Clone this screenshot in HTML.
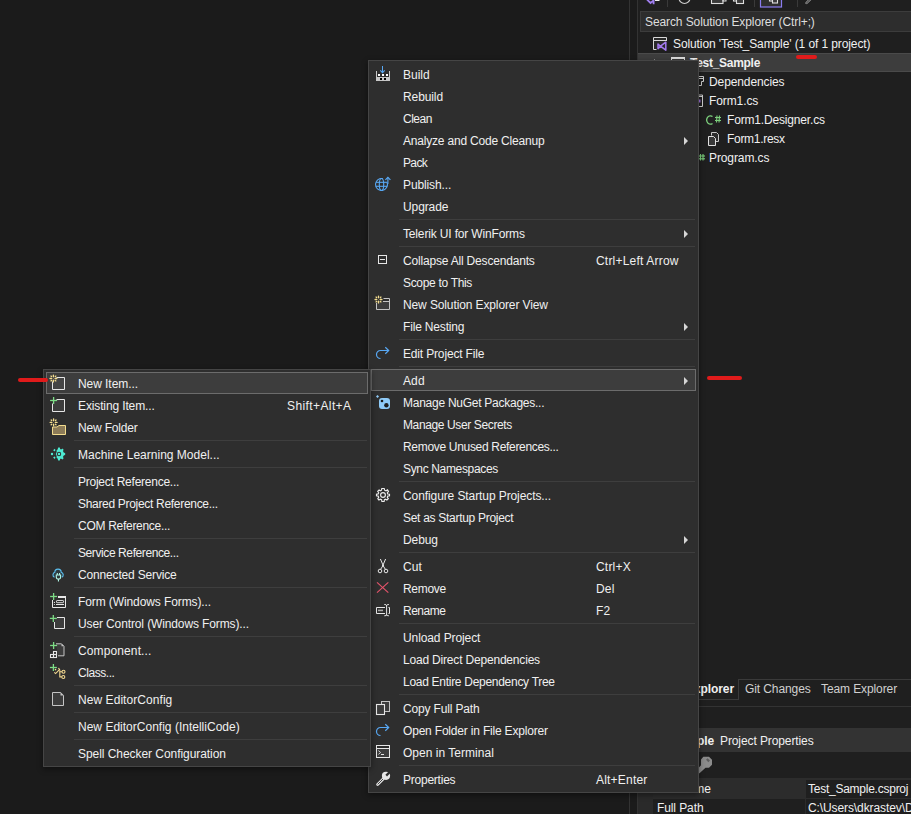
<!DOCTYPE html>
<html><head><meta charset="utf-8">
<style>
*{margin:0;padding:0;box-sizing:border-box}
html,body{width:911px;height:814px;overflow:hidden;background:#1b1b1b;font-family:"Liberation Sans",sans-serif;font-size:12px;color:#f0f0f0;letter-spacing:-0.1px}
.abs{position:absolute}
.menu{position:absolute;background:#2e2e2e;border:1px solid #454545;box-shadow:0 2px 6px rgba(0,0,0,.45)}
.it{position:absolute;left:2px;right:2px;height:22px;line-height:22px;white-space:nowrap}
.it .t{position:absolute;left:32px;top:1px}
.it .k{position:absolute;top:1px;letter-spacing:0.2px}
.it .ar{position:absolute;left:313px;top:8px;width:0;height:0;border-left:4.5px solid #d6d6d6;border-top:4px solid transparent;border-bottom:4px solid transparent}
.it .ic{position:absolute;left:4px;top:3px;width:16px;height:16px;overflow:visible}
.sel{background:#3d3d3d;outline:1px solid #6c6c6c;outline-offset:-1px}
.sep{position:absolute;left:30px;right:3px;height:1px;background:#3e3e3e}
.txt{white-space:nowrap;line-height:15px;padding-top:1px}

</style></head><body>
<!-- splitter lines -->
<div class="abs" style="left:629px;top:0;width:1px;height:814px;background:#333333"></div>
<div class="abs" style="left:637px;top:0;width:1px;height:814px;background:#333333"></div>
<!-- solution explorer panel -->
<div class="abs" style="left:638px;top:0;width:273px;height:814px;background:#1f1f1f"></div>
<!-- toolbar icons (cut off at top) -->
<svg class="abs" style="left:638px;top:0" width="273" height="11" viewBox="0 0 273 11">
  <path d="M8 -1.5 L12.5 3 L15.5 0.5 M15.6 -4 V4.2" fill="none" stroke="#a07ef0" stroke-width="1.8"/>
  <rect x="17" y="-2" width="4.5" height="3" fill="#f0f0f0"/>
  <rect x="29" y="0" width="1" height="7" fill="#3a3a3a"/>
  <circle cx="46.5" cy="-2" r="5.5" fill="none" stroke="#cfcfcf" stroke-width="1.2"/>
  <rect x="73.5" y="-4" width="11.5" height="7.5" fill="#3a3a3a" stroke="#dedede" stroke-width="1.1"/>
  <rect x="85" y="-2" width="3" height="3" fill="none" stroke="#dedede"/>
  <rect x="95.5" y="-4" width="5" height="5" fill="none" stroke="#dedede" stroke-width="1.1"/>
  <rect x="98.5" y="-2" width="7" height="5.5" fill="#3a3a3a" stroke="#dedede" stroke-width="1.1"/>
  <rect x="116" y="0" width="1" height="7" fill="#3a3a3a"/>
  <rect x="122.5" y="-1" width="21" height="8" fill="#2e2e2e" stroke="#8a7cf0" stroke-width="1.2"/>
  <rect x="131.5" y="-4" width="5" height="5" fill="none" stroke="#dedede" stroke-width="1.1"/>
  <rect x="134.5" y="-2" width="5" height="5" fill="#3a3a3a" stroke="#dedede" stroke-width="1.1"/>
  <rect x="159" y="0" width="1" height="7" fill="#3a3a3a"/>
  <path d="M168.5 3 L174 -2.5" stroke="#9a9a9a" stroke-width="2.4" stroke-linecap="round"/>
  <path d="M168.5 3 L174 -2.5" stroke="#1f1f1f" stroke-width="0.9" stroke-linecap="round"/>
</svg>
<!-- search box -->
<div class="abs" style="left:640px;top:11px;width:271px;height:21px;background:#2d2d2d;border:1px solid #3c3c3c;border-right:none"></div>
<div class="abs txt" style="left:645px;top:14px;color:#dedede">Search Solution Explorer (Ctrl+;)</div>
<!-- tree -->
<svg class="abs" style="left:652px;top:36px" width="16" height="16" viewBox="0 0 16 16">
  <rect x="1.5" y="1.5" width="13" height="12" fill="#2a2a2a"/>
  <path d="M4.5 13.5 H1.5 V1.5 H14.5 V5" fill="none" stroke="#d8d8d8" stroke-width="1"/><line x1="1.5" y1="4.5" x2="14.5" y2="4.5" stroke="#d8d8d8"/>
  <path d="M6 8 L8.5 10.2 L6 12.6Z M8.5 10.2 L13.8 6.2 V14.2Z" fill="none" stroke="#a47af0" stroke-width="1.5" stroke-linejoin="round"/>
</svg>
<div class="abs txt" style="left:673px;top:36px">Solution 'Test_Sample' (1 of 1 project)</div>
<div class="abs" style="left:638px;top:53px;width:273px;height:19px;background:#3d3d3d;border-top:1px solid #4a4a4a;border-bottom:1px solid #4a4a4a"></div>
<div class="abs" style="left:671px;top:57px;width:14px;height:10px;border:1px solid #dcdcdc;border-top-width:2px;background:#3a3a3a"></div>
<div class="abs" style="left:654px;top:59px;width:1px;height:1px;background:#888"></div>
<div class="abs txt" style="left:690px;top:55px;font-weight:bold;letter-spacing:-0.28px">Test_Sample</div>
<div class="abs txt" style="left:709px;top:74px">Dependencies</div>
<div class="abs txt" style="left:709px;top:93px">Form1.cs</div>
<svg class="abs" style="left:706px;top:114px" width="18" height="12" viewBox="0 0 18 12">
  <path d="M6.5 2.6 A3.6 4.2 0 1 0 6.5 9.4" fill="none" stroke="#7cd07c" stroke-width="1.3"/>
  <g stroke="#7cd07c" stroke-width="1.1"><line x1="11" y1="1.5" x2="10.5" y2="8.5"/><line x1="13.5" y1="1.5" x2="13" y2="8.5"/><line x1="9" y1="3.5" x2="15" y2="3.5"/><line x1="9" y1="6.5" x2="15" y2="6.5"/></g>
</svg>
<div class="abs txt" style="left:727px;top:112px;letter-spacing:-0.17px">Form1.Designer.cs</div>
<svg class="abs" style="left:707px;top:131px" width="14" height="16" viewBox="0 0 14 16">
  <path d="M4.5 4.5 V1.5 H9.5 L11.5 3.5 V10.5 H9" fill="#2c2c2c" stroke="#c8c8c8"/><path d="M1.5 5.5 H6.5 L8.5 7.5 V14.5 H1.5Z" fill="#383838" stroke="#e0e0e0"/>
</svg>
<div class="abs txt" style="left:727px;top:131px;letter-spacing:-0.3px">Form1.resx</div>
<svg class="abs" style="left:698px;top:153px" width="8" height="9" viewBox="0 0 8 9">
  <g stroke="#7cd07c" stroke-width="1.1"><line x1="2.5" y1="1" x2="2.5" y2="7.5"/><line x1="5" y1="1" x2="5" y2="7.5"/><line x1="0" y1="3" x2="7" y2="3"/><line x1="0" y1="5.8" x2="7" y2="5.8"/></g>
</svg>
<div class="abs txt" style="left:709px;top:150px">Program.cs</div>
<svg class="abs" style="left:690px;top:74px" width="16" height="36" viewBox="0 0 16 36">
  <path d="M6 2.5 H13.5 V7.5 H11.5 V11.5 H6" fill="none" stroke="#d0d0d0" stroke-width="1"/><line x1="6" y1="4.5" x2="13.5" y2="4.5" stroke="#d0d0d0"/>
  <path d="M6 21 H12.5 V32.5 H6" fill="none" stroke="#d0d0d0" stroke-width="1"/><line x1="6" y1="22.5" x2="12.5" y2="22.5" stroke="#d0d0d0"/>
  <rect x="8.5" y="25.5" width="2" height="3" fill="#a070e0"/>
</svg>
<!-- red marker under "1 of 1" -->
<div class="abs" style="left:796px;top:55px;width:21px;height:4px;border-radius:2px;background:#e01b1b"></div>

<!-- bottom tabs -->
<div class="abs" style="left:738px;top:679px;width:173px;height:1px;background:#3a3a3a"></div>
<div class="abs" style="left:738px;top:679px;width:1px;height:21px;background:#3a3a3a"></div>
<div class="abs" style="left:638px;top:699px;width:100px;height:1px;background:#3a3a3a"></div>
<div class="abs txt" style="left:600px;width:134px;text-align:right;top:681px;font-weight:bold;color:#f0f0f0">Solution Explorer</div>
<div class="abs txt" style="left:745px;top:681px;color:#d0d0d0">Git Changes</div>
<div class="abs txt" style="left:821px;top:681px;color:#d0d0d0">Team Explorer</div>
<div class="abs" style="left:638px;top:706px;width:273px;height:1px;background:#333333"></div>
<!-- properties -->
<div class="abs" style="left:638px;top:728px;width:273px;height:24px;background:#333333"></div>
<div class="abs txt" style="left:600px;width:114px;text-align:right;top:733px;font-weight:bold">Test_Sample</div>
<div class="abs txt" style="left:720px;top:733px">Project Properties</div>
<svg class="abs" style="left:696px;top:752px" width="22" height="24" viewBox="0 0 22 24">
  <path d="M7.3 4.8 H13 L16 7.8 V12.8 L13 15.7 H9.5 L3.5 21.3 H1 V17.5 L5 13.2 V7.5Z" fill="#8c8c8c"/>
  <path d="M10.8 7 L13.2 9.4" stroke="#5e5e5e" stroke-width="2.2"/>
</svg>
<div class="abs" style="left:638px;top:778px;width:15px;height:36px;background:#2a2a2a"></div>
<div class="abs" style="left:653px;top:778px;width:258px;height:21px;background:#2c2c2c"></div>
<div class="abs" style="left:806px;top:780px;width:105px;height:18px;background:#1f1f1f"></div>
<div class="abs" style="left:653px;top:799px;width:258px;height:15px;background:#1f1f1f"></div>
<div class="abs" style="left:805px;top:799px;width:1px;height:15px;background:#2c2c2c"></div>
<div class="abs txt" style="left:657px;top:781px">File Name</div>
<div class="abs txt" style="left:808px;top:781px;letter-spacing:-0.25px">Test_Sample.csproj</div>
<div class="abs txt" style="left:657px;top:800px">Full Path</div>
<div class="abs txt" style="left:808px;top:800px">C:\Users\dkrastev\Desktop</div>

<!-- main menu -->
<div class="menu" style="left:368px;top:60px;width:331px;height:733px">
<div class="it" style="top:2px"><svg class="ic" viewBox="0 0 16 16"><rect x="1" y="5" width="1" height="10" fill="#c8c8c8"/><rect x="14" y="5" width="1" height="10" fill="#c8c8c8"/><rect x="1" y="11" width="14" height="4" fill="#c8c8c8"/><rect x="3" y="8" width="2" height="2" fill="#fff"/><rect x="7" y="8" width="2" height="2" fill="#fff"/><rect x="11" y="8" width="2" height="2" fill="#fff"/><rect x="5" y="12" width="2" height="2" fill="#000"/><rect x="9" y="12" width="2" height="2" fill="#000"/><rect x="7" y="0" width="1" height="6" fill="#58a8f4"/><path d="M5.3 4.3 L7.5 6.6 L9.7 4.3" fill="none" stroke="#58a8f4" stroke-width="1.1"/></svg><span class="t" style="letter-spacing:-0.000px">Build</span></div>
<div class="it" style="top:24px"><span class="t" style="letter-spacing:-0.100px">Rebuild</span></div>
<div class="it" style="top:46px"><span class="t" style="letter-spacing:-0.500px">Clean</span></div>
<div class="it" style="top:68px"><span class="t" style="letter-spacing:-0.196px">Analyze and Code Cleanup</span><span class="ar"></span></div>
<div class="it" style="top:90px"><span class="t" style="letter-spacing:-0.633px">Pack</span></div>
<div class="it" style="top:112px"><svg class="ic" viewBox="0 0 16 16"><g fill="none" stroke="#58a8f4" stroke-width="1.1"><path d="M12.14 6.45 A6 6 0 1 1 8.05 2.7"/><ellipse cx="6.5" cy="8.5" rx="2.2" ry="6"/><line x1="0.8" y1="6.3" x2="12.3" y2="6.3"/><line x1="0.8" y1="10.3" x2="12.3" y2="10.3"/><line x1="12.9" y1="1.5" x2="12.9" y2="8"/><path d="M10.4 3.9 L12.9 1.3 L15.4 3.9"/></g></svg><span class="t" style="letter-spacing:-0.122px">Publish...</span></div>
<div class="it" style="top:134px"><span class="t" style="letter-spacing:-0.100px">Upgrade</span></div>
<div class="sep" style="top:158px"></div>
<div class="it" style="top:161px"><span class="t" style="letter-spacing:-0.155px">Telerik UI for WinForms</span><span class="ar"></span></div>
<div class="sep" style="top:185px"></div>
<div class="it" style="top:188px"><svg class="ic" viewBox="0 0 16 16"><rect x="3.5" y="3.5" width="8" height="8" fill="none" stroke="#e6e6e6" stroke-width="1"/><rect x="5" y="7" width="5" height="1" fill="#e6e6e6"/></svg><span class="t" style="letter-spacing:-0.187px">Collapse All Descendants</span><span class="k" style="left:225px">Ctrl+Left Arrow</span></div>
<div class="it" style="top:210px"><span class="t" style="letter-spacing:-0.317px">Scope to This</span></div>
<div class="it" style="top:232px"><svg class="ic" viewBox="0 0 16 16"><rect x="1.5" y="5" width="13" height="8.5" fill="#3c3c3c"/><path d="M1.5 7 V13.5 H14.5 V2.5 H8.5 M8 5.5 H14.5" fill="none" stroke="#c4c4c4" stroke-width="1"/><g stroke="#f3dc8e" stroke-width="1.35" stroke-linecap="round"><line x1="3.5" y1="0.10000000000000009" x2="3.5" y2="1.8"/><line x1="3.5" y1="5.2" x2="3.5" y2="6.9"/><line x1="0.10000000000000009" y1="3.5" x2="1.8" y2="3.5"/><line x1="5.2" y1="3.5" x2="6.9" y2="3.5"/><line x1="1.1" y1="1.1" x2="1.6" y2="1.6"/><line x1="5.4" y1="5.4" x2="5.9" y2="5.9"/><line x1="5.9" y1="1.1" x2="5.4" y2="1.6"/><line x1="1.6" y1="5.4" x2="1.1" y2="5.9"/></g></svg><span class="t" style="letter-spacing:-0.116px">New Solution Explorer View</span></div>
<div class="it" style="top:254px"><span class="t" style="letter-spacing:-0.173px">File Nesting</span><span class="ar"></span></div>
<div class="sep" style="top:278px"></div>
<div class="it" style="top:281px"><svg class="ic" viewBox="0 0 16 16"><g fill="none" stroke="#58a8f4" stroke-width="1.2"><path d="M13.6 5.5 H5.5 A4 4 0 0 0 5.5 13.5"/><path d="M10.3 2.2 L13.7 5.5 L10.3 8.8"/></g></svg><span class="t" style="letter-spacing:-0.163px">Edit Project File</span></div>
<div class="sep" style="top:305px"></div>
<div class="it sel" style="top:308px"><span class="t" style="letter-spacing:0.100px">Add</span><span class="ar"></span></div>
<div class="it" style="top:330px"><svg class="ic" viewBox="0 0 16 16"><rect x="4" y="4" width="11" height="11" rx="3" fill="#8fcbf8"/><circle cx="7" cy="7" r="1.3" fill="#1a1a1a"/><circle cx="11.4" cy="11.3" r="2.2" fill="#1e1e1e"/><path d="M2.5 0.9 L4 2.4 L2.5 3.9 L1 2.4Z" fill="#8fcbf8"/></svg><span class="t" style="letter-spacing:-0.257px">Manage NuGet Packages...</span></div>
<div class="it" style="top:352px"><span class="t" style="letter-spacing:-0.378px">Manage User Secrets</span></div>
<div class="it" style="top:374px"><span class="t" style="letter-spacing:-0.315px">Remove Unused References...</span></div>
<div class="it" style="top:396px"><span class="t" style="letter-spacing:-0.343px">Sync Namespaces</span></div>
<div class="sep" style="top:420px"></div>
<div class="it" style="top:423px"><svg class="ic" viewBox="0 0 16 16"><g fill="none" stroke="#ececec" stroke-width="1.15"><circle cx="8" cy="8" r="2.4"/><path d="M6.8 1.5 H9.2 L9.6 3.2 L11 3.8 L12.5 2.9 L13.5 4.5 L12.3 5.8 L12.7 7 L14.5 7.2 V8.8 L12.7 9.1 L12.3 10.3 L13.3 11.7 L11.9 13 L10.5 12.2 L9.4 12.7 L9.1 14.5 H6.9 L6.6 12.7 L5.3 12.2 L3.9 13.1 L2.8 11.8 L3.7 10.4 L3.2 9.1 L1.5 8.8 V7.2 L3.2 6.9 L3.7 5.7 L2.7 4.3 L4.1 3 L5.4 3.8 L6.5 3.2Z"/></g></svg><span class="t" style="letter-spacing:-0.093px">Configure Startup Projects...</span></div>
<div class="it" style="top:445px"><span class="t" style="letter-spacing:-0.290px">Set as Startup Project</span></div>
<div class="it" style="top:467px"><span class="t" style="letter-spacing:-0.100px">Debug</span><span class="ar"></span></div>
<div class="sep" style="top:491px"></div>
<div class="it" style="top:494px"><svg class="ic" viewBox="0 0 16 16"><g fill="none" stroke="#e6e6e6" stroke-width="1"><path d="M5.4 1 L8.4 8 M10.6 1 L7.6 8"/><path d="M8 7.5 L5.6 11.4 M8 7.5 L10.4 11.4"/><circle cx="5" cy="13" r="1.8"/><circle cx="11" cy="13" r="1.8"/></g><circle cx="8" cy="7.5" r="0.9" fill="#e6e6e6"/></svg><span class="t" style="letter-spacing:0.100px">Cut</span><span class="k" style="left:225px">Ctrl+X</span></div>
<div class="it" style="top:516px"><svg class="ic" viewBox="0 0 16 16"><g stroke="#e8546c" stroke-width="1.1"><line x1="2" y1="2.3" x2="13.3" y2="12.7"/><line x1="13.3" y1="2.3" x2="2" y2="12.7"/></g></svg><span class="t" style="letter-spacing:-0.300px">Remove</span><span class="k" style="left:225px">Del</span></div>
<div class="it" style="top:538px"><svg class="ic" viewBox="0 0 16 16"><g fill="none" stroke="#e6e6e6" stroke-width="1"><path d="M10 5.5 H1.5 V11.5 H10"/><path d="M11.6 3 V13.5 M9.3 2.5 Q11.6 2.5 11.6 3.5 Q11.6 2.5 13.9 2.5 M9.3 13.8 Q11.6 13.8 11.6 12.8 Q11.6 13.8 13.9 13.8 M13.5 5.5 H14.5 V11.5 H13.5"/></g><rect x="3" y="7.6" width="5" height="1.6" fill="#a8a8a8"/></svg><span class="t" style="letter-spacing:-0.500px">Rename</span><span class="k" style="left:225px">F2</span></div>
<div class="sep" style="top:562px"></div>
<div class="it" style="top:565px"><span class="t" style="letter-spacing:-0.100px">Unload Project</span></div>
<div class="it" style="top:587px"><span class="t" style="letter-spacing:-0.187px">Load Direct Dependencies</span></div>
<div class="it" style="top:609px"><span class="t" style="letter-spacing:-0.285px">Load Entire Dependency Tree</span></div>
<div class="sep" style="top:633px"></div>
<div class="it" style="top:636px"><svg class="ic" viewBox="0 0 16 16"><rect x="6.5" y="1.5" width="8" height="10" fill="#3c3c3c" stroke="#c4c4c4" stroke-width="1"/><rect x="1.5" y="4.5" width="8" height="10" fill="#3c3c3c" stroke="#e6e6e6" stroke-width="1.1"/></svg><span class="t" style="letter-spacing:-0.162px">Copy Full Path</span></div>
<div class="it" style="top:658px"><svg class="ic" viewBox="0 0 16 16"><g fill="none" stroke="#58a8f4" stroke-width="1.2"><path d="M13.6 5.5 H5.5 A4 4 0 0 0 5.5 13.5"/><path d="M10.3 2.2 L13.7 5.5 L10.3 8.8"/></g></svg><span class="t" style="letter-spacing:-0.189px">Open Folder in File Explorer</span></div>
<div class="it" style="top:680px"><svg class="ic" viewBox="0 0 16 16"><rect x="1.5" y="1.5" width="13" height="12" fill="#3c3c3c" stroke="#e6e6e6" stroke-width="1"/><rect x="2" y="2" width="12" height="2.5" fill="#2a2a2a"/><line x1="1.5" y1="4.5" x2="14.5" y2="4.5" stroke="#e6e6e6"/><path d="M3.4 6.6 L5.6 8.5 L3.4 10.4" fill="none" stroke="#cfcfcf" stroke-width="1"/><rect x="6" y="10" width="3" height="1" fill="#e6e6e6"/></svg><span class="t" style="letter-spacing:0.020px">Open in Terminal</span></div>
<div class="sep" style="top:704px"></div>
<div class="it" style="top:707px"><svg class="ic" viewBox="0 0 16 16"><line x1="2.6" y1="13.4" x2="8.6" y2="7.4" stroke="#e2e2e2" stroke-width="2.8" stroke-linecap="round"/><line x1="2.9" y1="13.1" x2="8" y2="8" stroke="#2e2e2e" stroke-width="0.9" stroke-linecap="round"/><circle cx="11" cy="4.8" r="4.1" fill="#e6e6e6"/><line x1="11.2" y1="4.6" x2="16" y2="-0.2" stroke="#2e2e2e" stroke-width="2.3"/></svg><span class="t" style="letter-spacing:-0.233px">Properties</span><span class="k" style="left:225px">Alt+Enter</span></div>
</div>
<!-- submenu -->
<div class="menu" style="left:43px;top:369px;width:328px;height:398px">
<div class="it sel" style="top:2px"><svg class="ic" viewBox="0 0 16 16"><rect x="2.5" y="2.5" width="12" height="12" fill="#454545"/><path d="M2.5 6.5 V14.5 H14.5 V2.5 H6.5" fill="none" stroke="#e6e6e6" stroke-width="1"/><g stroke="#f3dc8e" stroke-width="1.35" stroke-linecap="round"><line x1="3.4" y1="0.10000000000000009" x2="3.4" y2="1.8"/><line x1="3.4" y1="5.2" x2="3.4" y2="6.9"/><line x1="0.0" y1="3.5" x2="1.7" y2="3.5"/><line x1="5.1" y1="3.5" x2="6.8" y2="3.5"/><line x1="1.0" y1="1.1" x2="1.5" y2="1.6"/><line x1="5.3" y1="5.4" x2="5.8" y2="5.9"/><line x1="5.8" y1="1.1" x2="5.3" y2="1.6"/><line x1="1.5" y1="5.4" x2="1.0" y2="5.9"/></g></svg><span class="t" style="letter-spacing:-0.060px">New Item...</span></div>
<div class="it" style="top:24px"><svg class="ic" viewBox="0 0 16 16"><rect x="2.5" y="2.5" width="12" height="12" fill="#3c3c3c"/><path d="M2.5 6.5 V14.5 H14.5 V2.5 H6.5" fill="none" stroke="#e6e6e6" stroke-width="1"/><g stroke="#7ddc86" stroke-width="1.3"><line x1="0.10000000000000009" y1="3.5" x2="7.1" y2="3.5"/><line x1="3.6" y1="0.0" x2="3.6" y2="7.0"/></g></svg><span class="t" style="letter-spacing:-0.127px">Existing Item...</span><span class="k" style="left:241px;letter-spacing:0.4px">Shift+Alt+A</span></div>
<div class="it" style="top:46px"><svg class="ic" viewBox="0 0 16 16"><path d="M2.5 8 H7 L9 6.5 H15.5 V15.5 H2.5Z" fill="#8c7b58" stroke="#f3dc8e" stroke-width="1"/><g stroke="#f3dc8e" stroke-width="1.35" stroke-linecap="round"><line x1="3.6" y1="0.0" x2="3.6" y2="1.7"/><line x1="3.6" y1="5.1" x2="3.6" y2="6.8"/><line x1="0.20000000000000018" y1="3.4" x2="1.9000000000000001" y2="3.4"/><line x1="5.3" y1="3.4" x2="7.0" y2="3.4"/><line x1="1.2000000000000002" y1="1.0" x2="1.7000000000000002" y2="1.5"/><line x1="5.5" y1="5.3" x2="6.0" y2="5.8"/><line x1="6.0" y1="1.0" x2="5.5" y2="1.5"/><line x1="1.7000000000000002" y1="5.3" x2="1.2000000000000002" y2="5.8"/></g></svg><span class="t" style="letter-spacing:-0.167px">New Folder</span></div>
<div class="sep" style="top:70px"></div>
<div class="it" style="top:73px"><svg class="ic" viewBox="0 0 16 16"><g fill="#4eead2"><circle cx="2" cy="8" r="1.2"/><path d="M4.5 2.8 L5.8 4.2 L4.5 5.6 L3.2 4.2Z"/><path d="M4.5 10.2 L5.8 11.6 L4.5 13 L3.2 11.6Z"/><circle cx="4.6" cy="8" r="0.6"/></g><path fill="#4eead2" fill-rule="evenodd" d="M8.2 1.6 H9.8 L10.2 3.2 L11.8 3.2 L12.6 2.6 L13.6 3.7 L13 5 L13.5 6.2 L15.2 7.2 V8.8 L13.5 9.8 L13 11 L13.6 12.3 L12.6 13.4 L11.3 12.8 L10.2 12.8 L9.8 14.4 H8.2 L7.6 12.6 L6.3 11.6 L6.8 10 L6 8.8 V7.2 L6.8 6 L6.3 4.4 L7.6 3.4Z M9 5.8 A2.2 2.2 0 1 0 9 10.2 A2.2 2.2 0 1 0 9 5.8Z"/><circle cx="9" cy="8" r="1.2" fill="#4eead2"/><path d="M6.9 3.6 A5 5 0 0 0 6.9 12.4" fill="none" stroke="#2e2e2e" stroke-width="0.8"/></svg><span class="t" style="letter-spacing:0.008px">Machine Learning Model...</span></div>
<div class="sep" style="top:97px"></div>
<div class="it" style="top:100px"><span class="t" style="letter-spacing:-0.247px">Project Reference...</span></div>
<div class="it" style="top:122px"><span class="t" style="letter-spacing:-0.308px">Shared Project Reference...</span></div>
<div class="it" style="top:144px"><span class="t" style="letter-spacing:-0.287px">COM Reference...</span></div>
<div class="sep" style="top:168px"></div>
<div class="it" style="top:171px"><span class="t" style="letter-spacing:-0.405px">Service Reference...</span></div>
<div class="it" style="top:193px"><svg class="ic" viewBox="0 0 16 16"><path d="M4.5 11.3 A2.7 2.7 0 0 1 4.8 6.3 A3.2 3.2 0 0 1 11.2 6.3 A2.7 2.7 0 0 1 11.8 11.3" fill="#2c3a40" stroke="#5cc0f0" stroke-width="1.1"/><path d="M7.3 7 V9 M9.6 7 V9 M6.3 9 H10.6 V11 A2.15 2.15 0 0 1 6.3 11Z M8.45 13 V15.6" fill="none" stroke="#b0f5e6" stroke-width="1.1"/></svg><span class="t" style="letter-spacing:-0.163px">Connected Service</span></div>
<div class="sep" style="top:217px"></div>
<div class="it" style="top:220px"><svg class="ic" viewBox="0 0 16 16"><path d="M2.5 7 V14.5 H15.5 V3.5 H8.5" fill="none" stroke="#e6e6e6" stroke-width="1"/><rect x="8" y="3" width="8" height="2" fill="#e6e6e6"/><rect x="6.5" y="7.5" width="7" height="2.2" rx="0.6" fill="none" stroke="#e6e6e6" stroke-width="0.9"/><rect x="6" y="11" width="8" height="1" fill="#e6e6e6"/><circle cx="4.4" cy="9.4" r="0.6" fill="#e6e6e6"/><circle cx="4.4" cy="11.5" r="0.6" fill="#e6e6e6"/><g stroke="#7ddc86" stroke-width="1.3"><line x1="0.10000000000000009" y1="3.5" x2="7.1" y2="3.5"/><line x1="3.6" y1="0.0" x2="3.6" y2="7.0"/></g></svg><span class="t" style="letter-spacing:-0.100px">Form (Windows Forms)...</span></div>
<div class="it" style="top:242px"><svg class="ic" viewBox="0 0 16 16"><rect x="4.5" y="2.5" width="10" height="11" fill="#3c3c3c"/><path d="M4.5 7 V13.5 H14.5 V2.5 H7" fill="none" stroke="#e6e6e6" stroke-width="1"/><g stroke="#7ddc86" stroke-width="1.3"><line x1="-0.20000000000000018" y1="3.4" x2="6.8" y2="3.4"/><line x1="3.3" y1="-0.10000000000000009" x2="3.3" y2="6.9"/></g></svg><span class="t" style="letter-spacing:-0.120px">User Control (Windows Forms)...</span></div>
<div class="sep" style="top:266px"></div>
<div class="it" style="top:269px"><svg class="ic" viewBox="0 0 16 16"><path d="M6 1.8 H11.5 L14 4.3 V13.8 H8" fill="#3c3c3c" stroke="#c4c4c4" stroke-width="1"/><path d="M11.5 1.8 V4.3 H14Z" fill="#c4c4c4"/><g fill="none" stroke="#e6e6e6" stroke-width="1.1"><rect x="0.5" y="12.5" width="3" height="3"/><rect x="3.5" y="12.5" width="3" height="3"/><rect x="3.5" y="9.5" width="3" height="3"/></g><g stroke="#7ddc86" stroke-width="1.3"><line x1="0.10000000000000009" y1="3.5" x2="7.1" y2="3.5"/><line x1="3.6" y1="0.0" x2="3.6" y2="7.0"/></g></svg><span class="t" style="letter-spacing:0.118px">Component...</span></div>
<div class="it" style="top:291px"><svg class="ic" viewBox="0 0 16 16"><g fill="none" stroke="#f2d890" stroke-width="1.1"><path d="M4.3 8.4 L5.6 9.6 L9.6 5.5 L8.4 4"/><path d="M9.8 7.8 H12 M9.8 6.2 V12.9 H11.8"/><circle cx="13.5" cy="7.8" r="1.5"/><circle cx="13.3" cy="13" r="1.5"/></g><circle cx="5.5" cy="5.6" r="0.8" fill="#f2d890"/><g stroke="#7ddc86" stroke-width="1.3"><line x1="-0.10000000000000009" y1="3.5" x2="6.9" y2="3.5"/><line x1="3.4" y1="0.0" x2="3.4" y2="7.0"/></g></svg><span class="t" style="letter-spacing:-0.443px">Class...</span></div>
<div class="sep" style="top:315px"></div>
<div class="it" style="top:318px"><svg class="ic" viewBox="0 0 16 16"><path d="M2.5 1.5 H10.7 L13.5 4.4 V14.5 H2.5Z" fill="#3c3c3c" stroke="#c4c4c4" stroke-width="1"/><path d="M10.5 1.5 V4.5 H13.5Z" fill="#c4c4c4"/></svg><span class="t" style="letter-spacing:0.060px">New EditorConfig</span></div>
<div class="sep" style="top:342px"></div>
<div class="it" style="top:345px"><span class="t" style="letter-spacing:0.010px">New EditorConfig (IntelliCode)</span></div>
<div class="sep" style="top:369px"></div>
<div class="it" style="top:372px"><span class="t" style="letter-spacing:-0.054px">Spell Checker Configuration</span></div>
</div>
<!-- red marker arrows -->
<div class="abs" style="left:18px;top:378px;width:30px;height:4px;border-radius:2px;background:#e01b1b"></div>
<div class="abs" style="left:707px;top:376px;width:35px;height:4px;border-radius:2px;background:#e01b1b"></div>

</body></html>
